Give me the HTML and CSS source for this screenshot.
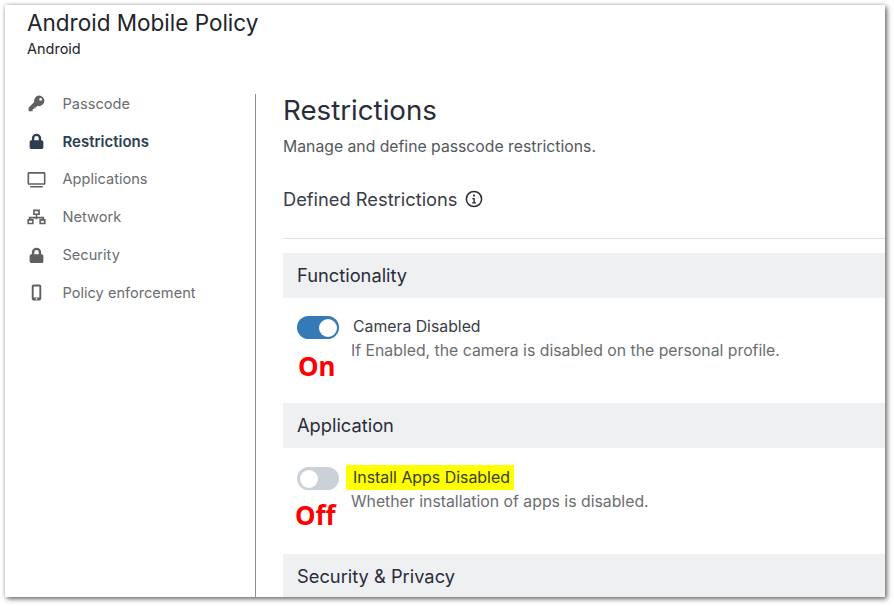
FILE: index.html
```html
<!DOCTYPE html>
<html lang="en">
<head>
    <meta charset="UTF-8">
    <title>Android Mobile Policy</title>
    <link rel="stylesheet" href="styles.css">
</head>
<body>

    <div class="frame">
        <div class="page-head">
            <h1>Android Mobile Policy</h1>
            <div class="platform">Android</div>
        </div>

        <div class="layout">
            <div class="side-col">
                <ul class="side-nav">
                    <li class="nav-item">
                        <svg class="nav-icon" viewBox="0 0 18 18"><path d="M11.500 1.500a5 5 0 0 1 5 5 5 5 0 0 1-6.600 4.700l-1.400 1.500H7v1.600H5.400v1.500l-.5.500H2a.5.5 0 0 1-.5-.5v-2.700l.2-.4 5.100-5.100a5 5 0 0 1 4.700-6.100zm1.400 2.300a1.300 1.300 0 1 0 0 2.600 1.300 1.300 0 0 0 0-2.600z" fill-rule="evenodd"/></svg>
                        <span>Passcode</span>
                    </li>
                    <li class="nav-item active">
                        <svg class="nav-icon" viewBox="0 0 18 18"><path d="M9 1.600a4.400 4.400 0 0 0-4.400 4.400v1.700h-.4c-1 0-1.700.8-1.700 1.700v5c0 1 .8 1.700 1.700 1.700h9.600c1 0 1.700-.8 1.700-1.700v-5c0-1-.8-1.700-1.700-1.700h-.4V6A4.400 4.400 0 0 0 9 1.600zm0 2.300A2.100 2.100 0 0 1 11.100 6v1.700H6.900V6A2.100 2.100 0 0 1 9 3.900z" fill-rule="evenodd"/></svg>
                        <span>Restrictions</span>
                    </li>
                    <li class="nav-item">
                        <svg class="nav-icon" viewBox="0 0 18 18"><path d="M1.800 2h14.400c.7 0 1.300.6 1.300 1.300v9.400c0 .7-.6 1.300-1.300 1.300H1.800c-.7 0-1.300-.6-1.300-1.300V3.300C.5 2.600 1.100 2 1.800 2zm.2 1.500v9h14v-9zM3 15.200h12v1.300H3z" fill-rule="evenodd"/></svg>
                        <span>Applications</span>
                    </li>
                    <li class="nav-item">
                        <svg class="nav-icon" viewBox="0 0 18 18"><path d="M5.800 1.500h6.400v5.200H9.700v1.700h6.500v2.100h1.400v5H11.700v-5h2.800V10H9.700v.6H8.300V10H3.500v.5h2.800v5H.4v-5h1.400V8.400h6.500V6.700H5.800zm1.600 1.500v2.200h3.200V3zM1.900 12v2h2.900v-2zm11.300 0v2h2.900v-2z" fill-rule="evenodd"/></svg>
                        <span>Network</span>
                    </li>
                    <li class="nav-item">
                        <svg class="nav-icon" viewBox="0 0 18 18"><path d="M9 1.600a4.400 4.400 0 0 0-4.400 4.400v1.700h-.4c-1 0-1.700.8-1.700 1.700v5c0 1 .8 1.700 1.700 1.700h9.600c1 0 1.700-.8 1.700-1.700v-5c0-1-.8-1.700-1.700-1.700h-.4V6A4.400 4.400 0 0 0 9 1.600zm0 2.300A2.100 2.100 0 0 1 11.100 6v1.700H6.900V6A2.100 2.100 0 0 1 9 3.900z" fill-rule="evenodd"/></svg>
                        <span>Security</span>
                    </li>
                    <li class="nav-item">
                        <svg class="nav-icon" viewBox="0 0 18 18"><path d="M6.200 1.500h5.600c1 0 1.700.8 1.700 1.700v11.600c0 1-.8 1.700-1.700 1.700H6.200c-1 0-1.700-.8-1.700-1.700V3.200c0-1 .8-1.700 1.700-1.700zm.1 1.800v10.400h5.400V3.300zM9 14.200a.8.8 0 1 0 0 1.600.8.8 0 0 0 0-1.600z" fill-rule="evenodd"/></svg>
                        <span>Policy enforcement</span>
                    </li>
                </ul>
            </div>

            <div class="content">
                <h2>Restrictions</h2>
                <p class="lead">Manage and define passcode restrictions.</p>
                <div class="defined">
                    <span>Defined Restrictions</span>
                    <svg class="info-icon" viewBox="0 0 18 18"><circle cx="9" cy="9" r="7.600" fill="none" stroke="#2a2c3a" stroke-width="1.500"/><circle cx="9" cy="5.600" r="1.100" fill="#2a2c3a"/><path d="M7.300 8h2.500v4.300h1.100v1.200H7.200v-1.200h1.200V9.200H7.300z" fill="#2a2c3a"/></svg>
                </div>

                <div class="section-bar first">Functionality</div>
                <div class="setting">
                    <div class="toggle-col">
                        <span class="toggle on"><span class="knob"></span></span>
                        <div class="note note-on">On</div>
                    </div>
                    <div class="setting-text">
                        <div class="setting-name"><span class="name-text">Camera Disabled</span></div>
                        <div class="setting-desc">If Enabled, the camera is disabled on the personal profile.</div>
                    </div>
                </div>

                <div class="section-bar">Application</div>
                <div class="setting second">
                    <div class="toggle-col">
                        <span class="toggle"><span class="knob"></span></span>
                        <div class="note note-off">Off</div>
                    </div>
                    <div class="setting-text">
                        <div class="setting-name"><span class="name-text marked">Install Apps Disabled</span></div>
                        <div class="setting-desc">Whether installation of apps is disabled.</div>
                    </div>
                </div>

                <div class="section-bar">Security &amp; Privacy</div>
            </div>
        </div>
    </div>

</body>
</html>
```
FILE: styles.css
```css
body {
    margin: 0;
    padding: 5px 9px 9px 5px;
    height: 606px;
    box-sizing: border-box;
    overflow: hidden;
    background: #fff;
    font-family: 'Inter', sans-serif;
    color: #2a2c3a;
}

.frame {
    height: 592px;
    overflow: hidden;
    background: #fff;
    box-shadow: 2px 2px 5px rgba(0, 0, 0, 0.55), 0 0 4px rgba(0, 0, 0, 0.2);
}

.page-head {
    padding: 4px 0 0 22px;
    height: 89px;
    box-sizing: border-box;
}

.page-head h1 {
    margin: 0;
    font-size: 22.5px;
    line-height: 27px;
    font-weight: 400;
    color: #22232b;
}

.platform {
    margin-top: 4px;
    font-size: 14.5px;
    line-height: 17px;
    color: #22232b;
}

.layout {
    display: flex;
    height: 503px;
}

.side-col {
    width: 251px;
    flex-shrink: 0;
    padding-left: 22px;
    box-sizing: border-box;
    border-right: 1px solid #8f8f8f;
}

.side-nav {
    list-style: none;
    margin: -9px 0 0;
    padding: 0;
}

.nav-item {
    display: flex;
    align-items: center;
    height: 37.8px;
    font-size: 14.6px;
    color: #6b6d70;
}

.nav-icon {
    width: 19px;
    height: 19px;
    margin-right: 16.5px;
    fill: #5f6062;
    flex-shrink: 0;
}

.nav-item.active {
    font-size: 15px;
    font-weight: 600;
    color: #2c3e50;
}

.nav-item.active .nav-icon {
    fill: #2c3e50;
}

.content {
    flex: 1;
    padding-left: 27px;
    min-width: 0;
}

.content h2 {
    margin: 0;
    padding-top: 1px;
    font-size: 27.7px;
    line-height: 30px;
    font-weight: 400;
    color: #2a2c3a;
}

.lead {
    margin: 12px 0 0;
    font-size: 15.75px;
    line-height: 20px;
    color: #55575e;
}

.defined {
    display: flex;
    align-items: center;
    gap: 8px;
    margin-top: 30px;
    height: 24px;
    padding-bottom: 27px;
    border-bottom: 1px solid #dedfe1;
    font-size: 18.3px;
    color: #3a3c48;
}

.info-icon {
    width: 18px;
    height: 18px;
}

.section-bar {
    padding-left: 14px;
    height: 45px;
    line-height: 45px;
    background: #eff0f2;
    font-size: 18.3px;
    color: #2a2c3a;
}

.section-bar.first {
    margin-top: 14px;
}

.setting {
    display: flex;
    height: 105px;
    padding: 18px 0 0 14px;
    box-sizing: border-box;
}

.setting.second {
    height: 106px;
    padding-top: 19px;
}

.toggle-col {
    width: 54px;
    flex-shrink: 0;
}

.toggle {
    display: flex;
    align-items: center;
    width: 42px;
    height: 23px;
    padding: 0 2.5px;
    box-sizing: border-box;
    border-radius: 12px;
    background: #cbd1d8;
}

.toggle.on {
    background: #337ab7;
    justify-content: flex-end;
}

.knob {
    width: 18px;
    height: 18px;
    border-radius: 50%;
    background: #fff;
}

.note {
    font-family: 'Noto Sans', sans-serif;
    font-weight: 700;
    font-size: 26px;
    line-height: 30px;
    color: #f00;
}

.note-on {
    margin: 12px 0 0 1px;
}

.note-off {
    margin: 10px 0 0 -2px;
}

.setting-text {
    margin-top: -2px;
}

.setting-name {
    font-size: 15.8px;
    line-height: 25px;
    height: 25px;
    color: #3a3c48;
}

.name-text {
    display: inline-block;
    padding: 0 4px 0 2px;
}

.name-text.marked {
    background: #ffff00;
    margin-left: -5px;
    padding: 0 4px 0 7px;
    font-size: 15.9px;
    color: #3a3c30;
}

.setting-desc {
    margin-top: 1.5px;
    font-size: 15.8px;
    line-height: 20px;
    color: #6b6d70;
}
```
